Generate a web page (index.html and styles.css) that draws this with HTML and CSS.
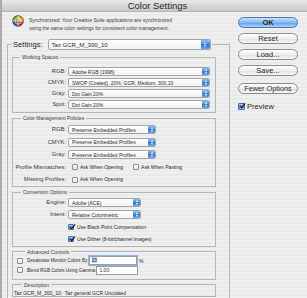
FILE: index.html
```html
<!DOCTYPE html>
<html lang="en">
<head>
  <meta charset="UTF-8">
  <meta name="viewport" content="width=device-width, initial-scale=1.0">
  <title>Color Settings</title>
  <link rel="stylesheet" href="styles.css">
</head>
<body>
<div class="window">
  <div class="titlebar">Color Settings</div>
  <div class="content">
    <div class="main">
      <div class="sync">
        <svg class="sync-icon" width="12" height="12" viewBox="0 0 24 24">
          <circle cx="12" cy="12" r="11.5" fill="#3a3a3a"/>
          <path d="M12 12 L12 2 A10 10 0 0 0 2 12 Z" fill="#6fae2c"/>
          <path d="M12 12 L22 12 A10 10 0 0 0 12 2 Z" fill="#f3b21c"/>
          <path d="M12 12 L12 22 A10 10 0 0 0 22 12 Z" fill="#dc3b2a"/>
          <path d="M12 12 L2 12 A10 10 0 0 0 12 22 Z" fill="#3c5ec2"/>
          <circle cx="12" cy="12" r="6" fill="none" stroke="#fff" stroke-width="1"/>
          <path d="M12 1.5 V22.5 M1.5 12 H22.5" stroke="#fff" stroke-width="1.2"/>
        </svg>
        <p>Synchronized: Your Creative Suite applications are synchronized<br>using the same color settings for consistent color management.</p>
      </div>

      <fieldset class="settings">
        <legend><span class="settings-row"><span class="settings-label">Settings:</span><span class="popup big">Taz GCR_M_300_10<span class="arrows"></span></span></span></legend>

        <fieldset class="group ws">
          <legend>Working Spaces</legend>
          <div class="rows">
            <span class="lbl">RGB:</span><span class="popup w142">Adobe RGB (1998)<span class="arrows"></span></span>
            <span class="lbl">CMYK:</span><span class="popup w142">SWOP (Coated), 20%, GCR, Medium, 300,10<span class="arrows"></span></span>
            <span class="lbl">Gray:</span><span class="popup w142">Dot Gain 20%<span class="arrows"></span></span>
            <span class="lbl">Spot:</span><span class="popup w142">Dot Gain 20%<span class="arrows"></span></span>
          </div>
        </fieldset>

        <fieldset class="group cmp">
          <legend>Color Management Policies</legend>
          <div class="rows">
            <span class="lbl">RGB:</span><span class="popup w88">Preserve Embedded Profiles<span class="arrows"></span></span>
            <span class="lbl">CMYK:</span><span class="popup w88">Preserve Embedded Profiles<span class="arrows"></span></span>
            <span class="lbl">Gray:</span><span class="popup w88">Preserve Embedded Profiles<span class="arrows"></span></span>
            <span class="lbl">Profile Mismatches:</span>
            <span class="checks">
              <span class="check"><span class="cb"></span>Ask When Opening</span>
              <span class="check"><span class="cb"></span>Ask When Pasting</span>
            </span>
            <span class="lbl">Missing Profiles:</span>
            <span class="checks">
              <span class="check"><span class="cb"></span>Ask When Opening</span>
            </span>
          </div>
        </fieldset>

        <fieldset class="group conv">
          <legend>Conversion Options</legend>
          <div class="rows">
            <span class="lbl">Engine:</span><span class="popup w73">Adobe (ACE)<span class="arrows"></span></span>
            <span class="lbl">Intent:</span><span class="popup w73">Relative Colorimetric<span class="arrows"></span></span>
            <span class="check col2"><span class="cb on"></span>Use Black Point Compensation</span>
            <span class="check col2"><span class="cb on"></span>Use Dither (8-bit/channel images)</span>
          </div>
        </fieldset>

        <fieldset class="group adv">
          <legend>Advanced Controls</legend>
          <div class="adv-row">
            <span class="cb"></span><span class="adv-label">Desaturate Monitor Colors By:</span>
            <span class="field focus w54"><span class="sel">20</span></span><span class="unit">%</span>
          </div>
          <div class="adv-row">
            <span class="cb"></span><span class="adv-label">Blend RGB Colors Using Gamma:</span>
            <span class="field w59">1.00</span><span class="unit"></span>
          </div>
        </fieldset>

        <fieldset class="group desc">
          <legend>Description</legend>
          <p>Taz GCR_M_300_10:&nbsp; Taz general GCR Uncoated</p>
        </fieldset>
      </fieldset>
    </div>

    <div class="side">
      <div class="btn ok">OK</div>
      <div class="btn">Reset</div>
      <div class="btn">Load...</div>
      <div class="btn">Save...</div>
      <div class="btn fewer">Fewer Options</div>
      <div class="preview"><span class="cb on big"></span>Preview</div>
    </div>
  </div>
</div>
</body>
</html>
```

FILE: styles.css
```css
*{
  margin: 0;
  padding: 0;
  box-sizing: border-box;
}
body{
  font-family: "Liberation Sans", Arial, sans-serif;
  color: #2a2a2a;
  background: #ececec;
}
.window{
  width: 307px;
  height: 298px;
  overflow: hidden;
  border-left: 2px solid #a9a9a9;
  background: repeating-linear-gradient(#efefef 0 2px, #eaeaea 2px 4px);
}
.titlebar{
  height: 12px;
  line-height: 11px;
  padding-left: 6px;
  text-align: center;
  font-size: 9.5px;
  color: #2a2a2a;
  background: linear-gradient(#e8e8e8, #c8c8c8);
  border-bottom: 1px solid #b4b4b4;
}
.content{
  display: flex;
}
.main{
  width: 228px;
  flex: none;
}

/* sync message */
.sync{
  display: flex;
  gap: 5px;
  height: 27px;
  padding: 3px 0 0 10px;
}
.sync-icon{
  flex: none;
}
.sync p{
  margin-top: 1px;
  font-size: 5px;
  line-height: 8px;
  color: #3a3a3a;
}

/* group boxes */
fieldset{
  border: 1px solid #b6b6b6;
  min-width: 0;
}
.settings{
  margin-left: 5px;
  width: 223px;
  height: 300px;
  padding: 0 13px 0 4px;
}
.settings > legend{
  padding: 0 1px;
}
.settings-row{
  display: flex;
  align-items: center;
}
.settings-label{
  font-size: 7.6px;
  margin-right: 5px;
}
.group{
  width: 204px;
  margin-top: 2px;
}
.group legend{
  margin-left: 8px;
  padding: 0 2px;
  font-size: 5px;
  line-height: 6px;
  color: #3a3a3a;
}
.ws{
  margin-top: 4px;
  padding: 7px 0 3px;
}
.ws legend{
  margin-left: 7px;
}
.cmp{
  padding: 4px 0 2px;
}
.conv{
  padding: 3px 0 2px;
}
.adv{
  padding: 1px 0 4px 4px;
}
.desc{
  padding: 2px 0 0 1px;
}
.desc p{
  font-size: 5px;
  line-height: 6px;
}

.rows{
  display: grid;
  grid-template-columns: 53px auto;
  column-gap: 2px;
  row-gap: 2px;
  align-items: center;
  justify-items: start;
}
.cmp .rows{
  row-gap: 3.5px;
}
.conv .rows{
  row-gap: 3.3px;
}
.lbl{
  justify-self: end;
  font-size: 5.8px;
  line-height: 9px;
  color: #3a3a3a;
  white-space: nowrap;
}
.col2{
  grid-column: 2;
}

/* popup menus */
.popup{
  display: flex;
  align-items: center;
  height: 9px;
  padding-left: 3px;
  border: 1px solid #a6a6a6;
  border-radius: 2px;
  background: linear-gradient(#ffffff, #f2f2f2);
  font-size: 5px;
  white-space: nowrap;
  overflow: hidden;
}
.popup.big{
  width: 163px;
  height: 11px;
  font-size: 6px;
}
.w142{ width: 142px; }
.w88{ width: 88px; }
.w73{ width: 73px; }
.arrows{
  margin-left: auto;
  flex: none;
  width: 7px;
  height: 100%;
  border-radius: 0 1px 1px 0;
  background: linear-gradient(#8cc0f4, #3f84dd 50%, #2a6fd0 51%, #6aa8ee);
  display: flex;
  flex-direction: column;
  align-items: center;
  justify-content: center;
  gap: 1px;
}
.big .arrows{
  width: 9px;
}
.arrows::before,
.arrows::after{
  content: "";
  width: 0;
  height: 0;
  border-left: 1.5px solid transparent;
  border-right: 1.5px solid transparent;
}
.arrows::before{
  border-bottom: 2px solid #fff;
}
.arrows::after{
  border-top: 2px solid #fff;
}

/* checkboxes */
.checks{
  display: flex;
  align-items: center;
  gap: 10px;
  margin-left: 4px;
}
.check{
  display: flex;
  align-items: center;
  gap: 2px;
  font-size: 5px;
  line-height: 9px;
  white-space: nowrap;
}
.conv .check{
  gap: 3px;
}
.cb{
  flex: none;
  position: relative;
  width: 6px;
  height: 6px;
  border: 1px solid #8c8c8c;
  border-radius: 1px;
  background: linear-gradient(#ffffff, #e6e6e6);
}
.cb.on{
  border-color: #4a6fa8;
  background: linear-gradient(#a9cdf6, #4f8fe0 55%, #7fb3f0);
}
.cb.on::after{
  content: "";
  position: absolute;
  left: 1.5px;
  top: -2px;
  width: 2px;
  height: 5px;
  border-right: 1.4px solid #111;
  border-bottom: 1.4px solid #111;
  transform: rotate(40deg);
}
.cb.big{
  width: 7px;
  height: 7px;
}

/* advanced controls */
.adv-row{
  display: flex;
  align-items: center;
  width: 126px;
  height: 9.5px;
}
.adv-label{
  margin-left: 4px;
  font-size: 4.6px;
  white-space: nowrap;
}
.field{
  margin-left: auto;
  height: 9px;
  padding-left: 2px;
  border: 1px solid #9c9c9c;
  background: #fff;
  font-size: 5px;
  line-height: 7px;
}
.field.focus{
  box-shadow: 0 0 0 1px #8fb6ea;
}
.sel{
  background: #b5d3fb;
}
.w54{ width: 54px; }
.w59{ width: 59px; }
.unit{
  width: 6px;
  padding-left: 2px;
  font-size: 5px;
}

/* buttons */
.side{
  margin-left: 8px;
  padding-top: 5px;
  width: 60px;
  display: flex;
  flex-direction: column;
  gap: 5px;
}
.btn{
  height: 11px;
  border: 1px solid #8d8d8d;
  border-radius: 6px;
  background: linear-gradient(#fdfdfd, #eeeeee 50%, #dedede 51%, #f6f6f6);
  font-size: 7.5px;
  line-height: 9px;
  text-align: center;
  white-space: nowrap;
}
.btn.ok{
  border-color: #4f76b0;
  background: linear-gradient(#c9e1fb, #84b7ef 50%, #5e9eec 51%, #a9d3fb);
  font-weight: bold;
}
.btn.fewer{
  margin-top: 2px;
  font-size: 7.3px;
}
.preview{
  margin-top: 3px;
  display: flex;
  align-items: center;
  gap: 2px;
  font-size: 7.6px;
  line-height: 9px;
}
```
